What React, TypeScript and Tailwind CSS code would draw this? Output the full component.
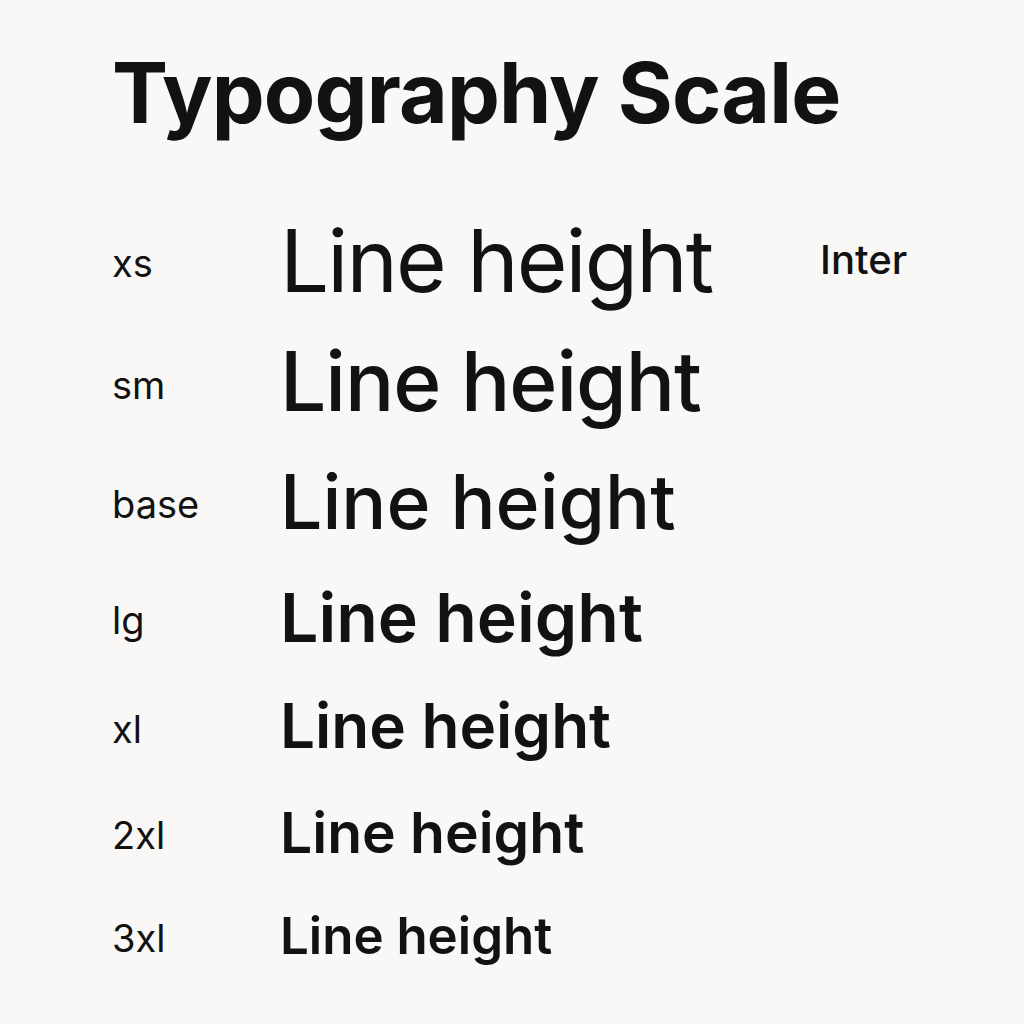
import React from 'react';

const ROWS = [
  { label: 'xs', size: 'text-[87px] tracking-[-0.022em]', weight: 'font-normal', height: 'h-[122px]' },
  { label: 'sm', size: 'text-[82px] tracking-[-0.013em]', weight: 'font-[450]', height: 'h-[122px]' },
  { label: 'base', size: 'text-[75px]', weight: 'font-medium', height: 'h-[116px]' },
  { label: 'lg', size: 'text-[68px]', weight: 'font-semibold', height: 'h-[116px]' },
  { label: 'xl', size: 'text-[62px]', weight: 'font-semibold', height: 'h-[102px]' },
  { label: '2xl', size: 'text-[57px]', weight: 'font-semibold', height: 'h-[110px]' },
  { label: '3xl', size: 'text-[51px]', weight: 'font-semibold', height: 'h-[96px]' }
];

export default function App() {
  return (
    <div className="min-h-[1024px] w-[1024px] bg-[#f9f8f6] pl-[112px] pt-[51px] text-[#121212] font-['Inter','Liberation_Sans',sans-serif]">
      <h1 className="text-[84px] font-bold leading-none tracking-[-0.01em]">Typography Scale</h1>

      <div className="mt-[64px] flex flex-col">
        {ROWS.map((row, i) => (
          <div key={row.label} className={`flex items-center ${row.height}`}>
            <span className="mt-[5px] w-[168px] text-[38px] leading-none">{row.label}</span>
            <span className={`w-[540px] leading-none ${row.size} ${row.weight}`}>Line height</span>
            {i === 0 && <span className="text-[40px] font-medium leading-none">Inter</span>}
          </div>
        ))}
      </div>
    </div>
  );
}
